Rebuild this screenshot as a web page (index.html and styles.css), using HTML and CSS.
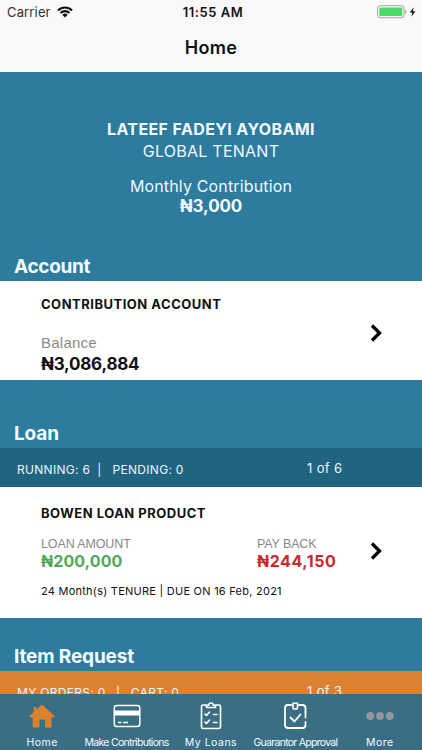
FILE: index.html
```html
<!DOCTYPE html>
<html lang="en">
<head>
<meta charset="utf-8">
<title>Home</title>
<link rel="stylesheet" href="styles.css">
</head>
<body>
<div class="app">
  <header class="header">
    <div class="status">
      <div class="carrier"><span>Carrier</span>
        <svg width="16" height="12" viewBox="0 0 16 12"><g fill="none" stroke="#111" stroke-width="2.1"><path d="M1 4.4a10 10 0 0 1 14 0M3.5 7a6.4 6.4 0 0 1 9 0"/></g><path d="M5.4 8.9a3.7 3.7 0 0 1 5.2 0L8 11.6z" fill="#111"/></svg>
      </div>
      <div class="time">11:55 AM</div>
      <div class="power">
        <svg width="40" height="14" viewBox="0 0 40 14"><rect x=".6" y=".8" width="26.4" height="12" rx="3.2" fill="#fff" stroke="#a5a5a5" stroke-width="1.1"/><rect x="2.3" y="2.5" width="23" height="8.6" rx="1.3" fill="#4cd964"/><path d="M28.2 4.7c1.7.7 1.7 3.5 0 4.2z" fill="#a5a5a5"/><path d="M36.8 2.2 32.7 7.5h2.6l-1 4.2 4.2-5.5h-2.7z" fill="#111"/></svg>
      </div>
    </div>
    <h1 class="title">Home</h1>
  </header>
  <main class="content">
    <section class="hero">
      <div class="name">LATEEF FADEYI AYOBAMI</div>
      <div class="tenant">GLOBAL TENANT</div>
      <div class="monthly">Monthly Contribution</div>
      <div class="monthly-sum">₦3,000</div>
    </section>
    <h2 class="heading account-heading">Account</h2>
    <article class="card account">
      <div class="details">
        <h3 class="card-title">CONTRIBUTION ACCOUNT</h3>
        <div class="balance-label">Balance</div>
        <div class="balance">₦3,086,884</div>
      </div>
      <svg class="chevron" width="14" height="20" viewBox="0 0 14 20"><path d="M3 2.500 10.500 10 3 17.500" fill="none" stroke="#000" stroke-width="3.300"/></svg>
    </article>
    <h2 class="heading loan-heading">Loan</h2>
    <div class="strip loan-strip"><div class="counts loan-counts"><span>RUNNING: 6</span><span class="bar">|</span><span>PENDING: 0</span></div><span class="page">1 of 6</span></div>
    <article class="card loan">
      <div class="details">
        <h3 class="card-title">BOWEN LOAN PRODUCT</h3>
        <div class="sums">
          <div class="sum"><div class="label">LOAN AMOUNT</div><div class="amount green">₦200,000</div></div>
          <div class="sum"><div class="label">PAY BACK</div><div class="amount red">₦244,150</div></div>
        </div>
        <div class="tenure">24 Month(s) TENURE | DUE ON 16 Feb, 2021</div>
      </div>
      <svg class="chevron" width="14" height="20" viewBox="0 0 14 20"><path d="M3 2.500 10.500 10 3 17.500" fill="none" stroke="#000" stroke-width="3.300"/></svg>
    </article>
    <h2 class="heading item-heading">Item Request</h2>
    <div class="strip item-strip"><div class="counts item-counts"><span>MY ORDERS: 0</span><span>|</span><span>CART: 0</span></div><span class="page">1 of 3</span></div>
  </main>
  <nav class="tabs">
    <div class="tab"><svg width="28" height="28" viewBox="0 0 28 28"><path d="M14 2.500 26.800 14.200l-.8 1.300h-2.500V25.500H17v-8h-5.500v8H4.700V15.500H2.200l-.8-1.300L5.700 10V5h2.600v2.600z" fill="#dc8131"/></svg><span class="wide">Home</span></div>
    <div class="tab"><svg width="28" height="28" viewBox="0 0 28 28"><rect x="1.300" y="3.500" width="25.500" height="21" rx="2.500" fill="none" stroke="#fff" stroke-width="1.500"/><path d="M1.500 8.500h25v5h-25z" fill="#fff"/><path d="M5 20.500h3.500M10 20.500h5" stroke="#fff" stroke-width="1.700"/></svg><span class="tight">Make Contributions</span></div>
    <div class="tab"><svg width="28" height="28" viewBox="0 0 28 28"><g fill="none" stroke="#fff" stroke-width="1.600" stroke-linejoin="round" stroke-linecap="round"><path d="M9.500 3H6Q4.500 3 4.500 4.500v20.500q0 1.500 1.500 1.500h16q1.500 0 1.500-1.500V4.500Q23.500 3 22 3h-3.500M9.500 5.500V3.200h2.300a2.200 2.200 0 0 1 4.400 0h2.300v2.300zM8 12l1.500 1.500 3-3.500M8 20l1.500 1.500 3-3.500M16.500 12.500H20M16.500 20.500H20"/></g></svg><span class="wide">My Loans</span></div>
    <div class="tab"><svg width="28" height="28" viewBox="0 0 28 28"><g fill="none" stroke="#fff" stroke-width="1.800" stroke-linejoin="round" stroke-linecap="round"><path d="M10.500 3H7Q4 3 4 6v17q0 3 3 3h14.500q3 0 3-3v-3M24.500 15.500V6q0-3-3-3H18"/><path d="M12 1.300h4.500v4.500q0 1.200-1.200 1.200h-2.100Q12 7 12 5.800z" stroke-width="1.600"/><path d="m9.500 15.500 4 4 6-7"/></g></svg><span class="tight">Guarantor Approval</span></div>
    <div class="tab"><svg width="28" height="28" viewBox="0 0 28 28"><g fill="#93979b"><circle cx="4.200" cy="14" r="3.900"/><circle cx="14" cy="14" r="3.900"/><circle cx="23.800" cy="14" r="3.900"/></g></svg><span class="wide">More</span></div>
  </nav>
</div>
</body>
</html>
```
FILE: styles.css
```css
* { box-sizing: border-box; margin: 0; }
body { font-family: Inter, "Liberation Sans", sans-serif; color: #111; }
.app { width: 422px; height: 750px; display: flex; flex-direction: column; overflow: hidden; background: #2d7b9d; white-space: nowrap; }
svg { display: block; flex: none; }
.header { height: 72px; flex: none; background: #f9f9f9; }
.status { height: 24px; display: grid; grid-template-columns: 1fr auto 1fr; align-items: center; padding: 0 5px 0 7px; font-size: 13px; line-height: 24px; }
.carrier { display: flex; align-items: center; gap: 6px; letter-spacing: .15px; color: #333; }
.time { font-weight: 600; letter-spacing: .55px; padding-left: 2px; }
.power { display: flex; justify-content: flex-end; }
.title { font-size: 18px; line-height: 48px; font-weight: 600; text-align: center; letter-spacing: .3px; }
.content { flex: 1; min-height: 0; overflow: hidden; }
.hero { height: 176px; padding-top: 47px; text-align: center; color: #eff9ff; font-size: 16px; line-height: 21px; }
.name { font-weight: 700; letter-spacing: .38px; }
.tenant { letter-spacing: .25px; line-height: 22px; }
.monthly { margin-top: 14px; letter-spacing: .15px; }
.monthly-sum { font-size: 17px; font-weight: 700; line-height: 19px; letter-spacing: -.1px; }
.heading { color: #f3fcff; font-size: 19px; font-weight: 700; padding-left: 14px; line-height: 30px; letter-spacing: -.15px; }
.account-heading { height: 33px; padding-top: 4px; letter-spacing: -.3px; }
.card { display: flex; background: #fff; padding-left: 41px; }
.details { width: 328px; flex: none; }
.chevron { align-self: center; }
.account { height: 99px; padding-top: 14px; }
.account .chevron { margin-top: -10px; }
.card-title { font-size: 13px; line-height: 18px; font-weight: 700; letter-spacing: .5px; }
.balance-label { font: 15px/20px "Liberation Sans", sans-serif; color: #888; margin-top: 20px; letter-spacing: .25px; }
.balance { font-size: 17px; line-height: 22px; font-weight: 700; letter-spacing: -.22px; }
.loan-heading { height: 68px; padding-top: 39px; }
.strip { height: 39px; display: flex; padding-left: 17px; align-items: center; color: #eaf7fc; font-size: 13px; line-height: 20px; }
.loan-strip { background: #20647f; }
.item-strip { background: #dc8131; height: 42px; }
.counts { width: 290px; flex: none; display: flex; padding-top: 4px; font-size: 12px; letter-spacing: .3px; }
.loan-counts { gap: 7px; }
.loan-counts .bar { padding-right: 4px; }
.item-counts { gap: 10.5px; padding-top: 2px; }
.page { letter-spacing: .35px; padding-top: 1px; }
.item-strip .page { padding-top: 0; margin-top: -2px; }
.loan { height: 131px; padding-top: 17px; }
.loan .chevron { margin-top: -20px; }
.sums { display: flex; margin-top: 15px; }
.sum { width: 216px; flex: none; }
.label { font: 12.5px/15px "Liberation Sans", sans-serif; color: #888; letter-spacing: -.12px; }
.amount { font-size: 16px; line-height: 19px; font-weight: 700; }
.green { color: #50a858; letter-spacing: .12px; }
.red { color: #ca2829; letter-spacing: .55px; }
.tenure { margin-top: 11px; font-size: 11px; line-height: 18px; letter-spacing: .25px; }
.item-heading { height: 53px; padding-top: 24px; }
.tabs { flex: none; height: 56px; background: #3a6e85; display: grid; grid-template-columns: repeat(5, 1fr); color: #f4fbff; font-size: 10.5px; line-height: 14px; padding-top: 8px; }
.tab { display: flex; flex-direction: column; align-items: center; gap: 6px; min-width: 0; }
.wide { letter-spacing: .5px; }
.tight { letter-spacing: -.72px; }
```
